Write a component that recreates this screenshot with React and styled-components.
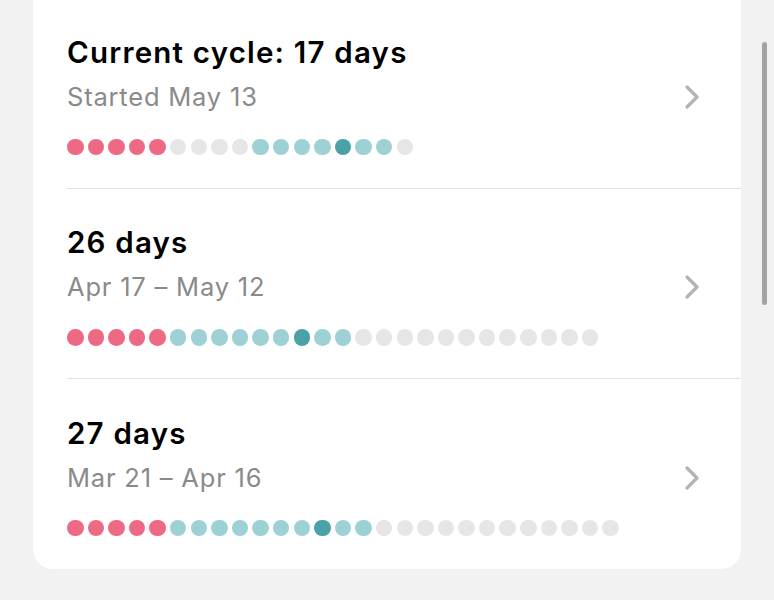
import React from 'react'
import styled, { createGlobalStyle } from 'styled-components'

const GlobalStyle = createGlobalStyle`
    html, body {
        margin: 0;
        padding: 0;
        background: #f2f2f2;
        font-family: Inter, "Noto Sans", "Liberation Sans", sans-serif;
        -webkit-font-smoothing: antialiased;
    }
`;

const colors = {
    period: '#ee6a84',
    fertile: '#9dd1d3',
    ovulation: '#4aa1a6',
    empty: '#e6e6e6',
};

const build = (parts) => parts.flatMap(([type, n]) => Array(n).fill(type));

const cycles = [
    {
        id: 'current',
        title: 'Current cycle: 17 days',
        subtitle: 'Started May 13',
        days: build([['period', 5], ['empty', 4], ['fertile', 4], ['ovulation', 1], ['fertile', 2], ['empty', 1]]),
    },
    {
        id: 'apr',
        title: '26 days',
        subtitle: 'Apr 17 – May 12',
        days: build([['period', 5], ['fertile', 6], ['ovulation', 1], ['fertile', 2], ['empty', 12]]),
    },
    {
        id: 'mar',
        title: '27 days',
        subtitle: 'Mar 21 – Apr 16',
        days: build([['period', 5], ['fertile', 7], ['ovulation', 1], ['fertile', 2], ['empty', 12]]),
    },
];

const Chevron = () => (
    <ChevronIcon width="16" height="26" viewBox="0 0 16 26">
        <polyline points="3,3 13,13 3,23" fill="none" stroke="#b3b3b3" strokeWidth="3.2" strokeLinecap="round" strokeLinejoin="round" />
    </ChevronIcon>
);

const CycleRow = ({ title, subtitle, days }) => (
    <Row>
        <Title>{title}</Title>
        <SubRow>
            <Subtitle>{subtitle}</Subtitle>
            <Chevron />
        </SubRow>
        <Dots>
            {days.map((type, i) => <Dot key={i} color={colors[type]} />)}
        </Dots>
    </Row>
);

const App = () => (
    <>
        <GlobalStyle />
        <Page>
            <Card>
                {cycles.map(c => <CycleRow key={c.id} {...c} />)}
            </Card>
            <Scrollbar />
        </Page>
    </>
);

const Page = styled.div`
    width: 774px;
    height: 600px;
    overflow: hidden;
    position: relative;
`;
const Card = styled.div`
    margin: -40px 0 0 33px;
    width: 708px;
    padding-top: 38px;
    background: #fff;
    border-radius: 20px;
`;
const Row = styled.div`
    margin-left: 34px;
    padding: 35.5px 0 32.5px;
    display: flex;
    flex-direction: column;
    border-bottom: 1px solid #e2e2e2;
    &:last-child {
        border-bottom: none;
    }
`;
const Title = styled.div`
    font-size: 29.5px;
    line-height: 36px;
    font-weight: 600;
    color: #000;
    letter-spacing: 1.2px;
`;
const SubRow = styled.div`
    display: flex;
    align-items: center;
    justify-content: space-between;
    margin-top: 12px;
    padding-right: 41px;
`;
const Subtitle = styled.div`
    font-size: 25.5px;
    line-height: 30px;
    color: #8a8a8a;
    letter-spacing: 0.8px;
`;
const ChevronIcon = styled.svg`
    display: block;
`;
const Dots = styled.div`
    display: flex;
    gap: 4.1px;
    margin-top: 27px;
`;
const Dot = styled.span`
    width: 16.5px;
    height: 16.5px;
    border-radius: 50%;
    background: ${({ color }) => color};
`;
const Scrollbar = styled.div`
    position: absolute;
    top: 42px;
    right: 7px;
    width: 5px;
    height: 263px;
    border-radius: 3px;
    background: #a3a3a3;
`;

export default App
